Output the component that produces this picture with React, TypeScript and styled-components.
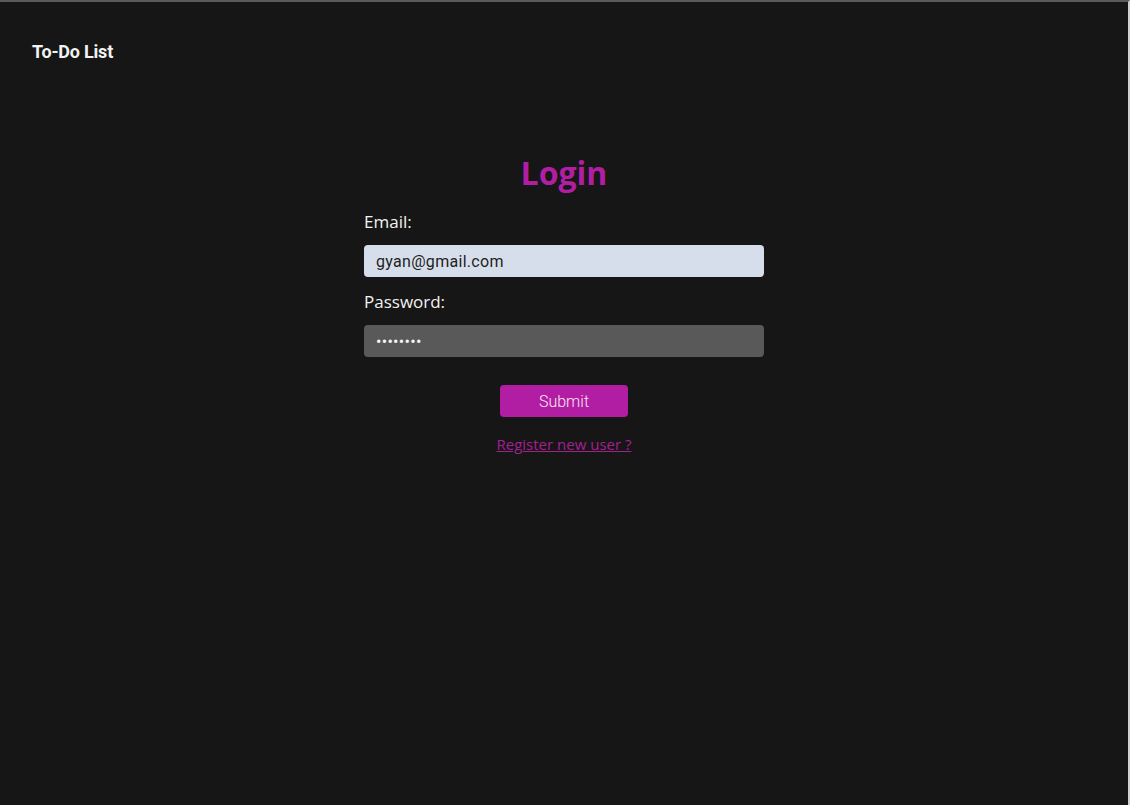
import React from "react";
import styled, { createGlobalStyle } from "styled-components";

const Global = createGlobalStyle`
  html, body { margin: 0; padding: 0; background: #161616; }
  body { font-family: "Open Sans", "Noto Sans", sans-serif; }
  * { box-sizing: border-box; }
`;

const Page = styled.div`
  height: 805px;
  background: #161616;
  border-top: 2px solid #5b5b5b;
  border-right: 2px solid #d0d0d0;
  display: flex;
  flex-direction: column;
`;

const Header = styled.header`
  padding: 38px 32px 0;
  height: 90px;
`;

const Brand = styled.div`
  font-family: Roboto, sans-serif;
  font-weight: 700;
  font-size: 18px;
  line-height: 24px;
  color: #f2f2f2;
  letter-spacing: -0.2px;
`;

const Main = styled.main`
  display: flex;
  justify-content: center;
  padding-top: 59px;
`;

const Form = styled.form`
  width: 400px;
  display: flex;
  flex-direction: column;
`;

const Title = styled.h1`
  margin: 0 0 14px;
  text-align: center;
  font-family: "Open Sans", sans-serif;
  font-weight: 700;
  font-size: 32px;
  line-height: 44px;
  color: #b21ea3;
`;

const Label = styled.label`
  font-family: "Open Sans", sans-serif;
  font-size: 17px;
  line-height: 26px;
  color: #f2f2f2;
  margin-bottom: 10px;
`;

const Input = styled.input<{ $filled?: boolean }>`
  width: 400px;
  height: 32px;
  border: none;
  border-radius: 4px;
  padding: 0 12px;
  font-family: Roboto, sans-serif;
  font-size: 16px;
  color: ${(p) => (p.$filled ? "#1e1e1e" : "#f5f5f5")};
  background: ${(p) => (p.$filled ? "#d7deeb" : "#595959")};
  margin-bottom: 12px;
  outline: none;
  letter-spacing: 0.3px;
`;

const Actions = styled.div`
  display: flex;
  flex-direction: column;
  align-items: center;
  margin-top: 16px;
`;

const Button = styled.button`
  width: 128px;
  height: 32px;
  border: none;
  border-radius: 4px;
  background: #b21ea3;
  color: #f9e6f5;
  font-family: Roboto, sans-serif;
  font-weight: 300;
  font-size: 16px;
  cursor: pointer;
`;

const RegisterLink = styled.a`
  margin-top: 17px;
  font-family: "Open Sans", sans-serif;
  font-size: 15px;
  color: #a5208f;
  text-decoration: underline;
  cursor: pointer;
`;

export default function App() {
  return (
    <>
      <Global />
      <Page>
        <Header>
          <Brand>To-Do List</Brand>
        </Header>
        <Main>
          <Form onSubmit={(e) => e.preventDefault()}>
            <Title>Login</Title>
            <Label htmlFor="email">Email:</Label>
            <Input id="email" type="email" $filled defaultValue="gyan@gmail.com" />
            <Label htmlFor="password">Password:</Label>
            <Input id="password" type="password" defaultValue="password" />
            <Actions>
              <Button type="submit">Submit</Button>
              <RegisterLink>Register new user ?</RegisterLink>
            </Actions>
          </Form>
        </Main>
      </Page>
    </>
  );
}
